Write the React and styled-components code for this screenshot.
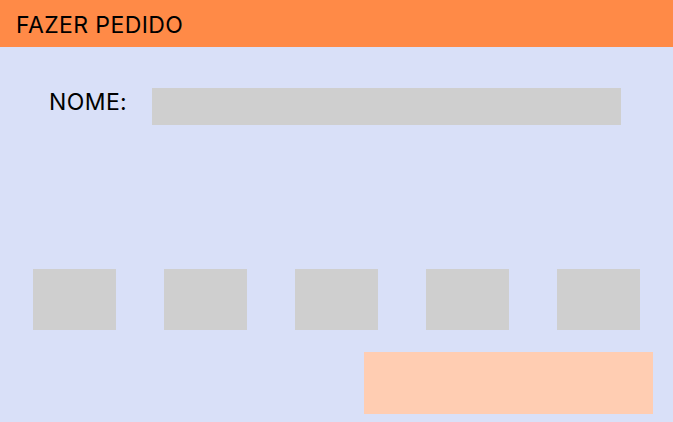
import React from "react";
import styled, { createGlobalStyle } from "styled-components";

const Global = createGlobalStyle`
  html, body { margin: 0; padding: 0; }
  body { font-family: Inter, "Noto Sans", sans-serif; background: #d9e0f8; }
`;

const Page = styled.div`
  width: 673px;
  height: 422px;
  background: #d9e0f8;
  display: flex;
  flex-direction: column;
  overflow: hidden;
`;

const Header = styled.header`
  height: 47px;
  background: #ff8a47;
  display: flex;
  align-items: center;
  padding-left: 16px;
  padding-top: 3px;
  font-size: 23px;
  letter-spacing: 0.4px;
  color: #000;
  box-sizing: border-box;
`;

const NameRow = styled.div`
  display: flex;
  align-items: center;
  margin-top: 41px;
  padding-left: 49px;
`;

const Label = styled.label`
  width: 103px;
  font-size: 23px;
  letter-spacing: 0.4px;
  color: #000;
  margin-top: -10px;
`;

const Input = styled.div`
  width: 469px;
  height: 37px;
  background: #cfcfcf;
`;

const Options = styled.div`
  display: flex;
  gap: 48px;
  padding-left: 33px;
  margin-top: 144px;
`;

const Option = styled.div`
  width: 83px;
  height: 61px;
  background: #cfcfcf;
`;

const Footer = styled.div`
  display: flex;
  justify-content: flex-end;
  padding-right: 20px;
  margin-top: 22px;
`;

const SubmitButton = styled.div`
  width: 289px;
  height: 62px;
  background: #ffcdb2;
`;

export default function App() {
  return (
    <>
      <Global />
      <Page>
        <Header>FAZER PEDIDO</Header>
        <NameRow>
          <Label>NOME:</Label>
          <Input />
        </NameRow>
        <Options>
          {[0, 1, 2, 3, 4].map((i) => (
            <Option key={i} />
          ))}
        </Options>
        <Footer>
          <SubmitButton />
        </Footer>
      </Page>
    </>
  );
}
